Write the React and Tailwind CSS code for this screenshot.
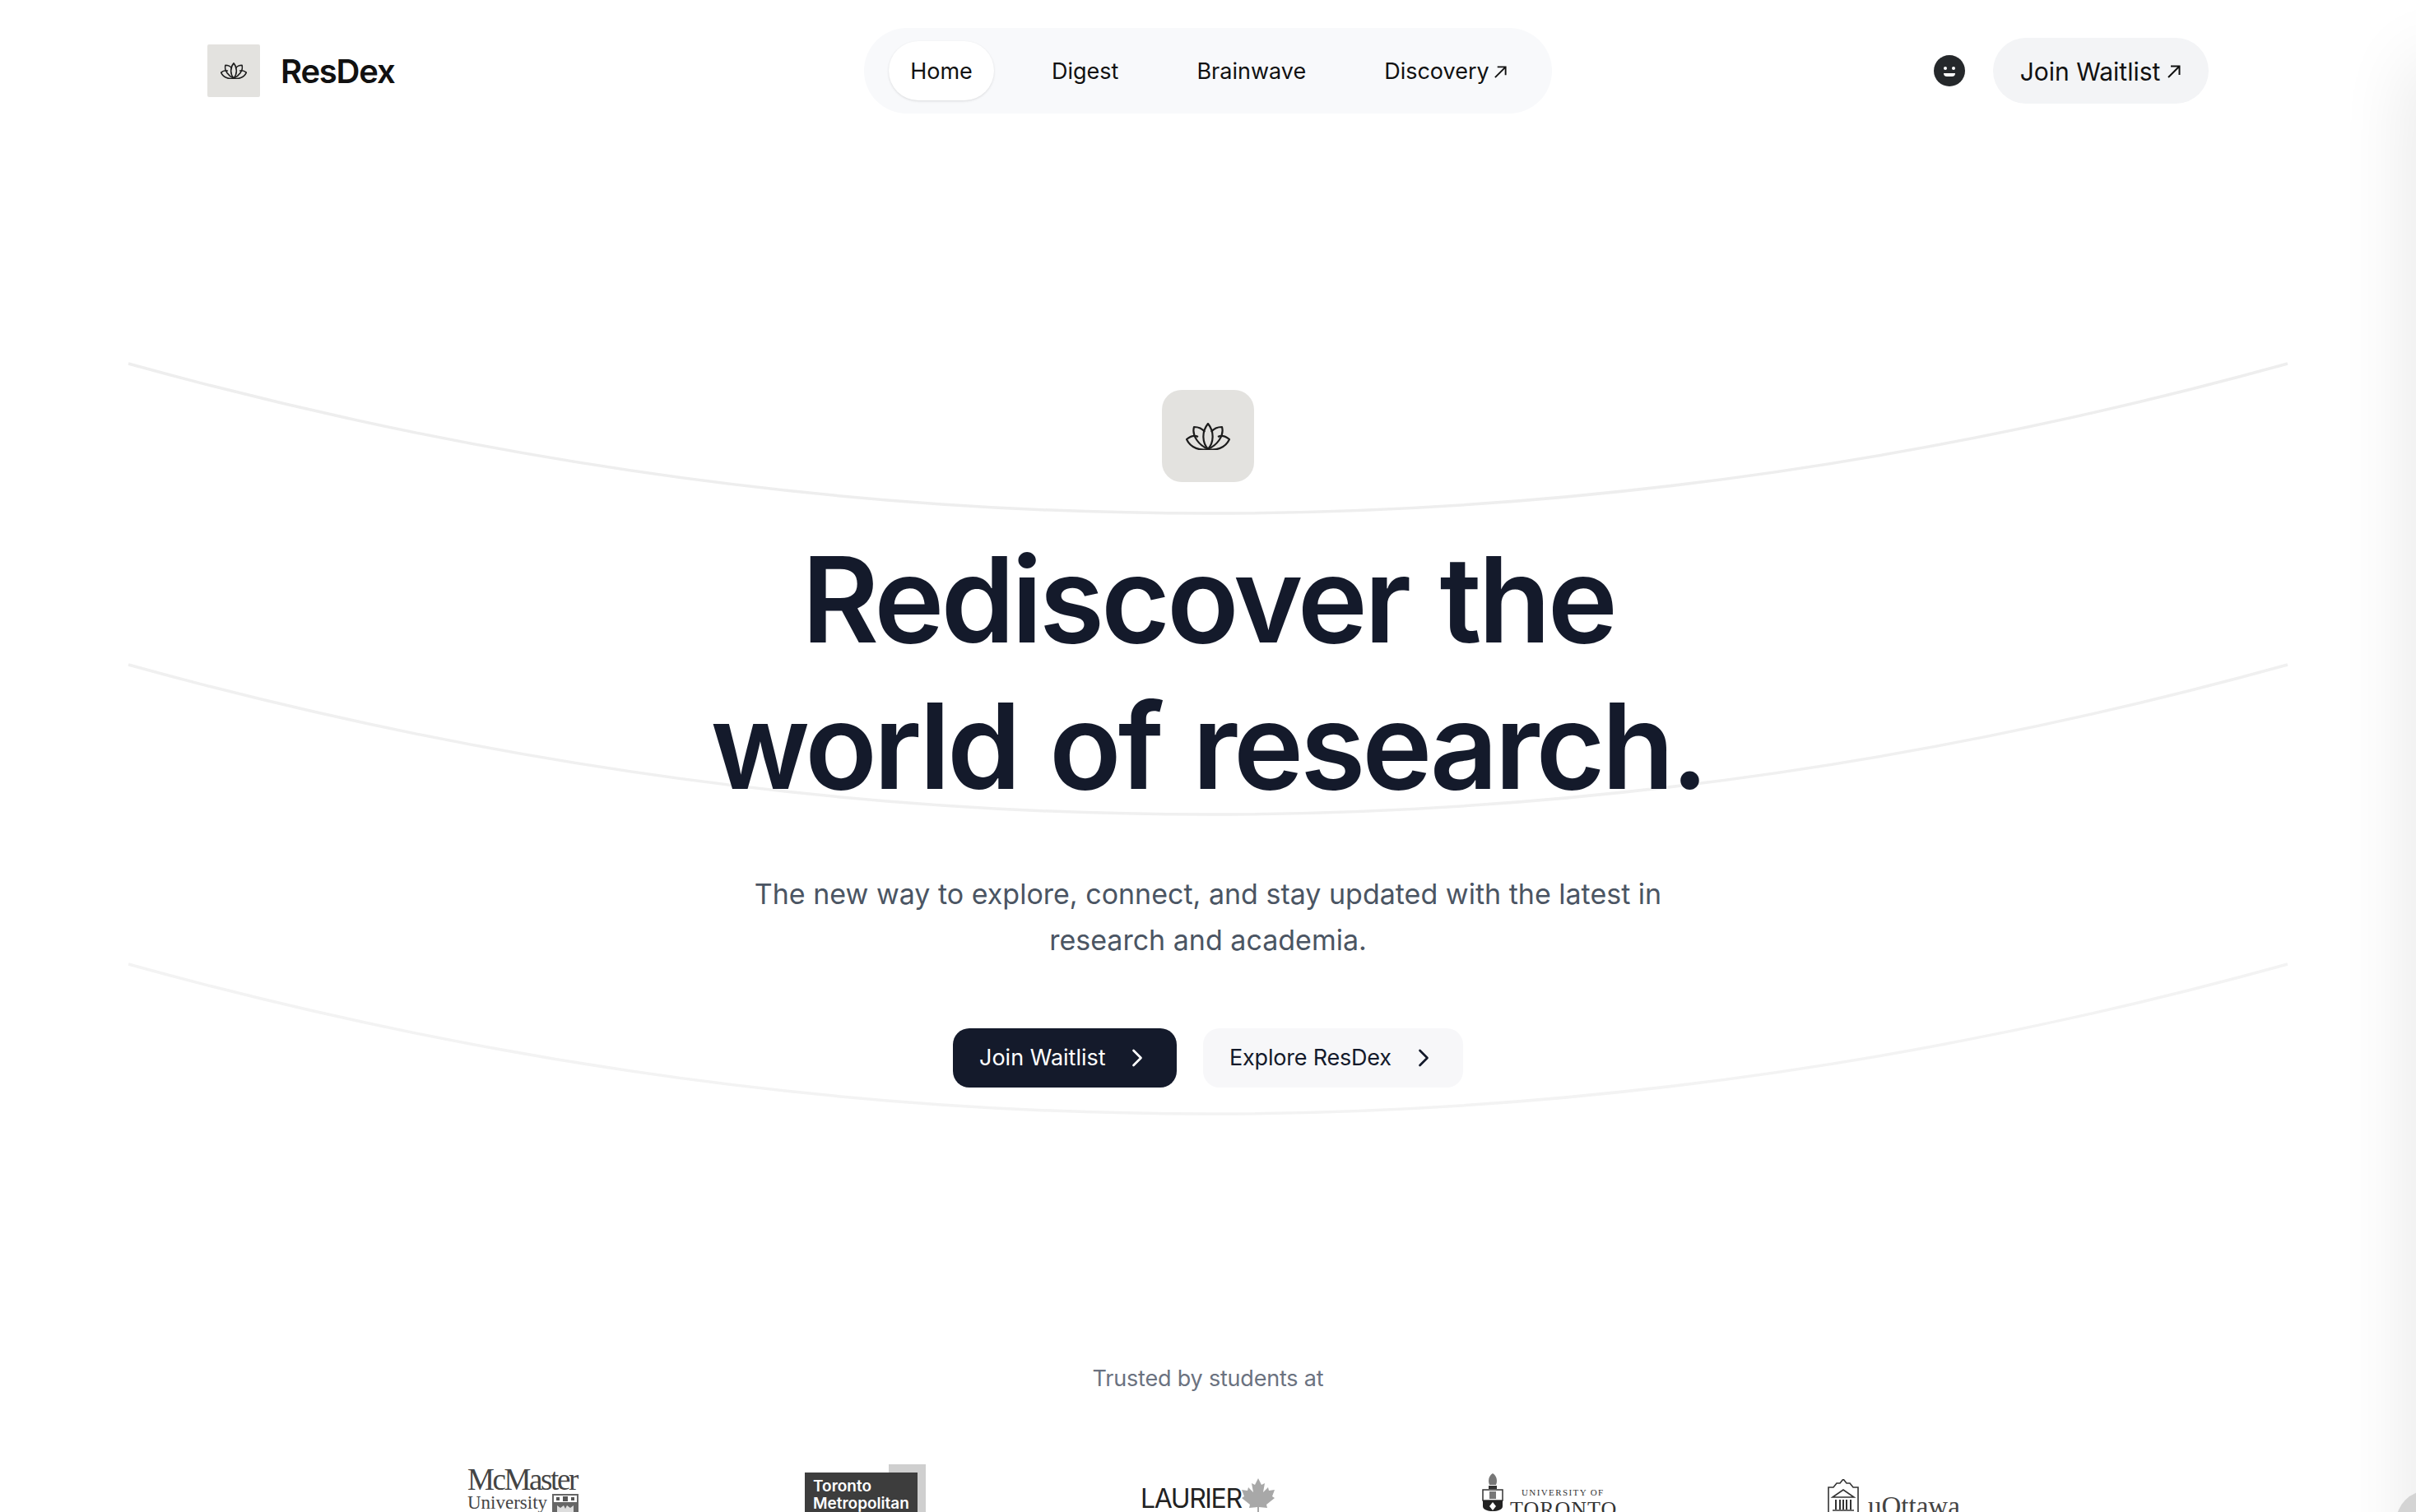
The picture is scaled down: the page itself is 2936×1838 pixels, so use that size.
import { ChevronRight } from "lucide-react"

const Lotus = ({ className, weight = 2 }) => (
    <svg viewBox="0 0 54 33" className={className} fill="none" stroke="#1c1c1c" strokeWidth={weight} strokeLinejoin="round">
        <path d="M27 32C20 24 19 11 27 1C35 11 34 24 27 32Z" />
        <path d="M27 32C16 27 7 16 10 5C15 5 20 7 23 11" />
        <path d="M27 32C38 27 47 16 44 5C39 5 34 7 31 11" />
        <path d="M27 32C18 34 6 31 1 20C6 16 11 15 15 17" />
        <path d="M27 32C36 34 48 31 53 20C48 16 43 15 39 17" />
    </svg>
)

const Arrow = ({ className }) => (
    <svg viewBox="0 0 18 18" className={className} fill="none" stroke="currentColor" strokeWidth="2">
        <path d="M2 16L15 3M5 2.500H15.500V13" />
    </svg>
)

const Arc = ({ y, color }) => (
    <path d={`M156 ${y}Q1468 ${y + 364} 2780 ${y}`} stroke={color} strokeWidth="3.500" fill="none" />
)

const Maple = () => (
    <svg viewBox="0 0 40 42" className="w-[40px] h-[42px] shrink-0" fill="#a8a8a8">
        <path d="M20 0l4 8 4-2-2 11 6-6 1 4 7-1-3 8 3 2-10 8 1 4-10-1v7h-2v-7l-10 1 1-4L0 24l3-2-3-8 7 1 1-4 6 6-2-11 4 2z" />
    </svg>
)

const Crest = () => (
    <svg viewBox="0 0 26 46" className="w-[26px] h-[46px] shrink-0">
        <path d="M13 0c5 3 6 9 4 14H9C7 9 8 3 13 0Z" fill="#777" />
        <rect x="8" y="15" width="10" height="4" fill="#333" />
        <rect x="1" y="20" width="24" height="13" fill="#fff" stroke="#333" strokeWidth="1.500" />
        <rect x="9" y="22" width="8" height="9" fill="#777" />
        <path d="M1 33h24v7c0 4-6 6-12 6S1 44 1 40Z" fill="#222" />
        <path d="M13 35l4 5-4 5-4-5Z" fill="#fff" />
    </svg>
)

const Shield = () => (
    <svg viewBox="0 0 32 24" className="mt-[1px] w-[32px] h-[24px] shrink-0">
        <rect width="32" height="24" fill="#666" />
        <rect x="2" y="2" width="28" height="8" fill="#fff" />
        <rect x="5" y="4" width="4" height="4" fill="#555" />
        <rect x="13" y="3" width="6" height="6" fill="#555" />
        <rect x="23" y="4" width="4" height="4" fill="#555" />
        <path d="M6 14l4 3 4-3 2 4 2-4 4 3 4-3v8H6Z" fill="#ddd" />
    </svg>
)

const Building = () => (
    <svg viewBox="0 0 38 46" className="w-[38px] h-[46px] shrink-0" fill="none" stroke="#333" strokeWidth="1.600">
        <path d="M1 46V10h6l4-5h4l4-5 4 5h4l4 5h6v36" />
        <path d="M6 22L19 13l13 9Z" />
        <path d="M10 25v12M15 25v12M19 25v12M23 25v12M28 25v12" strokeWidth="2" />
        <path d="M6 38h26M6 42h26" />
    </svg>
)

const navItems = ["Digest", "Brainwave"]

const App = () => {
    return (
        <div className="relative h-[1838px] overflow-hidden bg-white font-['Inter',sans-serif] text-[#141a2b]">
            <svg className="absolute left-0 top-0 w-[2936px] h-[1838px]" viewBox="0 0 2936 1838">
                <Arc y={442} color="#eeeeee" />
                <Arc y={808} color="#f0f0f0" />
                <Arc y={1172} color="#f3f3f3" />
            </svg>
            <div className="absolute -right-[60px] top-[70px] w-[60px] h-[1900px] rounded-[40px] shadow-[0_0_90px_rgba(0,0,0,0.12)]"></div>
            <div className="absolute left-[2912px] top-[1812px] w-[76px] h-[76px] rounded-full bg-[#d4d4d4]"></div>

            <div className="relative">
                <header className="grid grid-cols-[1fr_auto_1fr] items-center px-[252px] pt-[34px]">
                    <div className="flex items-center gap-[25px]">
                        <div className="flex h-[64px] w-[64px] items-center justify-center rounded-[2px] bg-[#e3e2df]">
                            <Lotus className="w-[32px] h-[20px]" weight={2.6} />
                        </div>
                        <span className="pt-[2px] text-[40px] font-semibold tracking-[-1.2px] text-[#111]">ResDex</span>
                    </div>
                    <nav className="flex h-[104px] w-[836px] items-center rounded-full bg-[#f8f9fb] pl-[30px] text-[27px] text-[#111]">
                        <span className="flex h-[72px] w-[128px] items-center justify-center rounded-full bg-white pt-[2px] shadow-[0_1px_3px_rgba(0,0,0,0.12)]">Home</span>
                        <div className="ml-[70px] flex gap-[95px] pt-[2px]">
                            {navItems.map(item => <span key={item}>{item}</span>)}
                            <span className="flex items-center gap-[5px]">Discovery <Arrow className="w-[17px] h-[17px]" /></span>
                        </div>
                    </nav>
                    <div className="flex items-center justify-end gap-[34px]">
                        <div className="relative h-[38px] w-[38px] rounded-full bg-[#25282b]">
                            <span className="absolute left-[12px] top-[14px] h-[4px] w-[4px] rounded-full bg-white"></span>
                            <span className="absolute right-[12px] top-[14px] h-[4px] w-[4px] rounded-full bg-white"></span>
                            <span className="absolute left-[12px] top-[22px] h-[4px] w-[14px] rounded-b-full bg-white"></span>
                        </div>
                        <button className="flex h-[80px] w-[262px] items-center justify-center gap-[8px] rounded-full bg-[#f3f4f6] pt-[2px] text-[30px] text-[#111]">
                            Join Waitlist <Arrow className="w-[18px] h-[18px]" />
                        </button>
                    </div>
                </header>

                <main className="flex flex-col items-center pt-[336px]">
                    <div className="flex h-[112px] w-[112px] items-center justify-center rounded-[24px] bg-[#e3e2df]">
                        <Lotus className="w-[54px] h-[33px]" weight={2.2} />
                    </div>
                    <h1 className="mt-[54px] text-center text-[144px] font-semibold leading-[178px] tracking-[-4px] [word-spacing:6px]">
                        Rediscover the<br />world of research.
                    </h1>
                    <p className="mt-[63px] w-[1200px] text-center text-[34px] leading-[56px] text-[#4b5563]">
                        The new way to explore, connect, and stay updated with the latest in research and academia.
                    </p>
                    <div className="mt-[79px] flex gap-[32px] text-[27px]">
                        <button className="flex h-[72px] w-[272px] items-center justify-between rounded-[20px] bg-[#141a2b] pl-[32px] pr-[30px] text-white">
                            Join Waitlist <ChevronRight className="w-[36px] h-[36px]" strokeWidth={1.8} />
                        </button>
                        <button className="flex h-[72px] w-[316px] items-center justify-between rounded-[20px] bg-[#f7f7f9] pl-[32px] pr-[30px] tracking-[-0.2px] text-[#141a2b]">
                            Explore ResDex <ChevronRight className="w-[36px] h-[36px]" strokeWidth={1.8} />
                        </button>
                    </div>
                    <p className="mt-[334px] text-[27px] leading-[40px] tracking-[-0.2px] text-[#6b7280]">Trusted by students at</p>

                    <div className="mt-[84px] flex items-start self-start pl-[568px] text-[#333]">
                        <div className="w-[410px] font-['Liberation_Serif',serif] text-[#444]">
                            <div className="mt-[3px] text-[37px] leading-[32px] tracking-[-2.400px]">McMaster</div>
                            <div className="flex items-start gap-[6px] text-[23px] leading-[24px]">
                                University
                                <Shield />
                            </div>
                        </div>
                        <div className="relative w-[410px]">
                            <div className="absolute left-[102px] top-0 h-[110px] w-[45px] bg-[#cfcfcf]"></div>
                            <div className="relative mt-[10px] h-[100px] w-[137px] bg-[#3d3d3d] pl-[10px] pt-[6px] text-[19px] font-semibold leading-[21px] text-white">
                                Toronto<br />Metropolitan<br />University
                            </div>
                        </div>
                        <div className="mt-[17px] flex w-[415px] items-start -ml-[2px]">
                            <span className="mt-[10px] text-[32px] leading-[30px] tracking-[-1.400px] text-[#222]">LAURIER</span>
                            <Maple />
                        </div>
                        <div className="mt-[11px] flex w-[420px] gap-[8px]">
                            <Crest />
                            <div className="mt-[17px] font-['Liberation_Serif',serif] text-[#333]">
                                <div className="pl-[14px] text-[11px] leading-[12px] tracking-[1.400px] whitespace-nowrap">UNIVERSITY OF</div>
                                <div className="text-[26px] leading-[30px] tracking-[1px]">TORONTO</div>
                            </div>
                        </div>
                        <div className="mt-[18px] flex gap-[11px]">
                            <Building />
                            <span className="mt-[17px] font-['Liberation_Serif',serif] text-[33px] leading-[32px] text-[#444]">uOttawa</span>
                        </div>
                    </div>
                </main>
            </div>
        </div>
    )
}

export default App
